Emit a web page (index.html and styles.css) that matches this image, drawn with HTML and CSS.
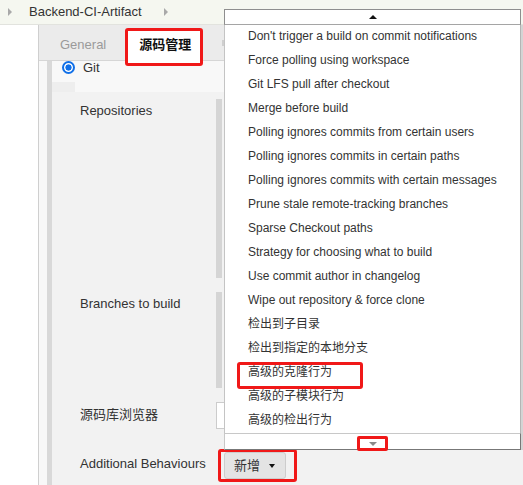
FILE: index.html
```html
<!DOCTYPE html>
<html lang="zh">
<head>
<meta charset="utf-8">
<title>Backend-CI-Artifact</title>
<link rel="stylesheet" href="styles.css">
</head>
<body>
<header class="topbar">
  <span class="crumb-arrow"></span>
  <span class="crumb">Backend-CI-Artifact</span>
  <span class="crumb-arrow"></span>
</header>
<div class="main">
  <div class="gutter"></div>
  <div class="panel">
    <nav class="tabs">
      <span class="tab">General</span>
      <span class="tab active">源码管理</span>
      <span class="tab-sep"></span>
    </nav>
    <div class="content">
      <div class="section">
        <div class="git-row"><span class="radio"></span><span class="git-label">Git</span></div>
        <div class="inner-head"><span class="head-tab"></span></div>
        <div class="inner">
          <div class="label l1">Repositories</div>
          <div class="field"><div class="bar bar-repo"></div></div>
          <div class="label l2">Branches to build</div>
          <div class="field"><div class="bar bar-branch"></div></div>
          <div class="label l3">源码库浏览器</div>
          <div class="field"><div class="input"></div></div>
          <div class="label l4">Additional Behaviours</div>
          <div class="field">
            <span class="btn-wrap"><span class="btn">新增<span class="caret"></span></span></span>
          </div>
        </div>
      </div>
    </div>
  </div>
</div>

<div class="dropdown">
  <div class="dd-up"><span class="tri-up"></span></div>
  <ul class="dd-list">
    <li>Don't trigger a build on commit notifications</li>
    <li>Force polling using workspace</li>
    <li>Git LFS pull after checkout</li>
    <li>Merge before build</li>
    <li>Polling ignores commits from certain users</li>
    <li>Polling ignores commits in certain paths</li>
    <li>Polling ignores commits with certain messages</li>
    <li>Prune stale remote-tracking branches</li>
    <li>Sparse Checkout paths</li>
    <li>Strategy for choosing what to build</li>
    <li>Use commit author in changelog</li>
    <li>Wipe out repository &amp; force clone</li>
    <li>检出到子目录</li>
    <li>检出到指定的本地分支</li>
    <li class="marked">高级的克隆行为</li>
    <li>高级的子模块行为</li>
    <li>高级的检出行为</li>
  </ul>
  <div class="dd-down"><span class="down-mark"><span class="tri-down"></span></span></div>
</div>
</body>
</html>
```

FILE: styles.css
```css
* { box-sizing: border-box; margin: 0; padding: 0; }

body {
  width: 523px;
  height: 485px;
  overflow: hidden;
  position: relative;
  font-family: "Liberation Sans", Arial, "Noto Sans CJK SC", sans-serif;
  font-size: 13px;
  color: #333;
  background: #fff;
}

/* top breadcrumb bar */
.topbar {
  height: 25px;
  background: #f5f7f0;
  border-bottom: 1px solid #e2e3de;
  display: flex;
  align-items: center;
  padding-left: 8px;
}
.crumb-arrow {
  width: 0;
  height: 0;
  border-left: 4px solid #a9a9a9;
  border-top: 4px solid transparent;
  border-bottom: 4px solid transparent;
}
.crumb {
  margin: 0 22px 0 17px;
  line-height: 18px;
  color: #333;
}

/* main area */
.main {
  display: flex;
  height: 460px;
}
.gutter { width: 38px; background: #fff; }
.panel {
  flex: 1;
  border-left: 1px solid #cfcfcf;
  background: #f8f8f8;
  display: flex;
  flex-direction: column;
}

/* tabs */
.tabs {
  height: 36px;
  flex: none;
  background: #ebebeb;
  border-bottom: 1px solid #d6d6d6;
  display: flex;
  align-items: flex-start;
}
.tab {
  line-height: 18px;
  margin-top: 11px;
  color: #9a9a9a;
  white-space: nowrap;
}
.tab:first-child { margin-left: 21px; margin-right: 19px; }
.tab.active {
  position: relative;
  z-index: 1;
  margin-top: 3px;
  height: 38px;
  padding: 5px 9px 0 11px;
  border: 3px solid #f01818;
  border-radius: 3px;
  background: #fff;
  color: #111;
  font-weight: bold;
  margin-right: 19px;
}
.tab-sep {
  width: 2px;
  height: 6px;
  margin-top: 15px;
  background: #cfcfcf;
}

/* content */
.content {
  flex: 1;
  display: flex;
  flex-direction: column;
}
.section {
  flex: 1;
  margin-left: 8px;
  border-left: 5px solid #d9d9d9;
  display: flex;
  flex-direction: column;
}
.git-row {
  height: 21px;
  flex: none;
  display: flex;
  align-items: center;
  padding-left: 10px;
  padding-bottom: 8px;
}
.radio {
  width: 13px;
  height: 13px;
  border-radius: 50%;
  border: 2px solid #1170e8;
  background: radial-gradient(circle, #1170e8 0 2.8px, #fff 3.4px);
}
.git-label {
  margin-left: 8px;
  line-height: 13px;
  color: #333;
}
.inner-head {
  height: 10px;
  flex: none;
  display: flex;
}
.head-tab {
  width: 23px;
  background: #eeeeee;
}
.inner {
  flex: 1;
  background: #f2f2f2;
  display: grid;
  grid-template-columns: 164px 1fr;
  grid-template-rows: 193px 110px 45px 1fr;
}
.label {
  padding-left: 28px;
  line-height: 18px;
  color: #333;
  white-space: nowrap;
}
.l1 { padding-top: 10px; }
.l2 { padding-top: 10px; }
.l3 { padding-top: 11px; }
.l4 { padding-top: 15px; }

.field { display: flex; flex-direction: column; align-items: flex-start; }
.bar {
  width: 6px;
  margin-top: 7px;
  background: #d5d5d5;
}
.bar-repo { height: 179px; }
.bar-branch { height: 96px; }
.input {
  margin-top: 7px;
  width: 100%;
  height: 27px;
  background: #fff;
  border: 1px solid #cccccc;
}

.btn-wrap {
  position: relative;
  margin-top: 12px;
  margin-left: 8px;
}
.btn-wrap::after {
  content: "";
  position: absolute;
  left: -6px;
  top: -3px;
  right: -11px;
  bottom: -3px;
  border: 3px solid #f01818;
  border-radius: 3px;
}
.btn {
  display: flex;
  align-items: center;
  height: 27px;
  padding: 0 10px 0 9px;
  background: #e4e4e4;
  border: 1px solid #cdcdcd;
  border-radius: 3px;
  color: #333;
  line-height: 18px;
}
.caret {
  margin-left: 9px;
  width: 0;
  height: 0;
  border-top: 4px solid #111;
  border-left: 3.5px solid transparent;
  border-right: 3.5px solid transparent;
}

/* dropdown overlay */
.dropdown {
  position: absolute;
  left: 224px;
  top: 9px;
  width: 297px;
  display: flex;
  flex-direction: column;
  font-size: 12px;
}
.dd-up {
  height: 16px;
  background: #fff;
  border: 1px solid #8e8e8e;
  border-bottom-color: #a5a5a5;
  display: flex;
  justify-content: center;
  align-items: center;
}
.tri-up {
  width: 0;
  height: 0;
  border-bottom: 4px solid #111;
  border-left: 4px solid transparent;
  border-right: 4px solid transparent;
}
.dd-list {
  list-style: none;
  background: #fff;
  border-left: 1px solid #c4c4c4;
  border-right: 1px solid #b5b5b5;
  box-shadow: 2px 0 0 #d4d4d4;
}
.dd-list li {
  height: 24px;
  line-height: 22px;
  padding-left: 23px;
  color: #333;
  white-space: nowrap;
}
.dd-list li.marked { position: relative; }
.dd-list li.marked::before {
  content: "";
  position: absolute;
  left: 12px;
  top: 1px;
  width: 120px;
  height: 21px;
  border: 3px solid #f01818;
  border-radius: 3px;
}
.dd-down {
  height: 17px;
  background: #fff;
  border: 1px solid #c8c8c8;
  border-right-color: #777;
  border-bottom-color: #777;
  box-shadow: 2px 0 0 #d4d4d4;
  display: flex;
  justify-content: center;
  align-items: flex-end;
}
.down-mark {
  width: 31px;
  height: 15px;
  margin-bottom: -2px;
  border: 3px solid #f01818;
  border-radius: 2px;
  display: flex;
  justify-content: center;
  align-items: center;
}
.tri-down {
  width: 0;
  height: 0;
  border-top: 4px solid #8a8a8a;
  border-left: 4px solid transparent;
  border-right: 4px solid transparent;
}
```
